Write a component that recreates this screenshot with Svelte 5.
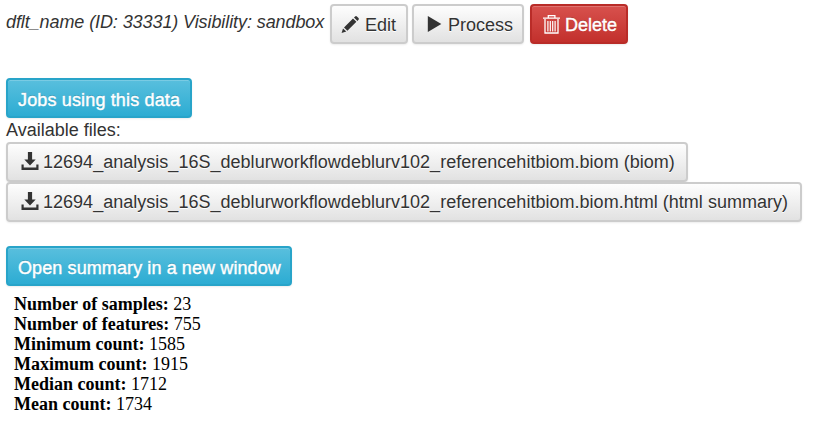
<script>
  const files = [
    { name: '12694_analysis_16S_deblurworkflowdeblurv102_referencehitbiom.biom (biom)', width: 682 },
    { name: '12694_analysis_16S_deblurworkflowdeblurv102_referencehitbiom.biom.html (html summary)', width: 796 }
  ];
  const stats = [
    ['Number of samples', 23],
    ['Number of features', 755],
    ['Minimum count', 1585],
    ['Maximum count', 1915],
    ['Median count', 1712],
    ['Mean count', 1734]
  ];
</script>

<main>
  <header>
    <i class="title">dflt_name (ID: 33331) Visibility: sandbox</i>
    <button class="btn edit">
      <svg width="20" height="20" viewBox="0 0 20 20"><path fill="#333" d="M.6 18l1.4-4.6 3.3 3.2zM3 12.4L12 3.4l3.4 3.3-9 9zM13 2.5l1.1-1.1q.9-.9 1.8 0l1.6 1.6q.9.9 0 1.8l-1.1 1.1z"/></svg>
      <span>Edit</span>
    </button>
    <button class="btn process">
      <svg width="20" height="20" viewBox="0 0 20 20"><path fill="#333" d="M2.8 1L16.3 9 2.8 17z"/></svg>
      <span>Process</span>
    </button>
    <button class="btn danger">
      <svg width="20" height="20" viewBox="0 0 20 20" fill="none" stroke="#fff"><path stroke-width="1.3" d="M1 3.2h17M6.3 3V.7h6.6V3M3 4v14h13V4"/><path stroke-width="1.2" d="M5.9 6v10.5M8.3 6v10.5M10.7 6v10.5M13.1 6v10.5"/></svg>
      <span>Delete</span>
    </button>
  </header>

  <button class="btn info jobs"><span>Jobs using this data</span></button>
  <div class="label">Available files:</div>
  <div class="files">
    {#each files as file}
      <button class="btn file" style:width="{file.width}px">
        <svg width="18" height="20" viewBox="0 0 18 20"><path fill="#333" d="M6.9 0h4.2v7.4h3.6L9 13.6 3.3 7.4h3.6zM.5 12.4h2.2v3.2h12.6v-3h2.2v5.4H.5z"/></svg>
        <span>{file.name}</span>
      </button>
    {/each}
  </div>
  <button class="btn info open"><span>Open summary in a new window</span></button>

  <section>
    {#each stats as [label, value]}
      <div><b>{label}:</b> {value}</div>
    {/each}
  </section>
</main>

<style>
  :global(body) { margin: 0; background: #fff; }
  main {
    box-sizing: border-box;
    height: 430px;
    padding: 4px 6px 0;
    display: flex;
    flex-direction: column;
    align-items: flex-start;
    overflow: hidden;
    font: 18px/20px "Liberation Sans", Arial, sans-serif;
    color: #333;
    white-space: nowrap;
  }
  header { display: flex; height: 40px; margin-bottom: 34px; }
  .title { width: 324px; line-height: 36px; letter-spacing: -.09px; }
  .btn {
    box-sizing: border-box;
    flex: none;
    display: flex;
    align-items: center;
    height: 40px;
    margin: 0;
    padding: 1px 0 0 10px;
    border: 2px solid #ccc;
    border-radius: 4px;
    background: linear-gradient(#fff, #e0e0e0);
    background-origin: border-box;
    box-shadow: inset 0 1px 0 rgba(255,255,255,.2), 0 1px 2px rgba(0,0,0,.08);
    color: #333;
    font: inherit;
    text-align: left;
    text-shadow: 0 1px 0 #fff;
    white-space: nowrap;
  }
  svg { flex: none; display: block; }
  .edit { width: 78px; margin-right: 4px; padding-left: 9px; gap: 4px; }
  .process { width: 112px; margin-right: 6px; padding-left: 11px; gap: 3px; }
  .danger {
    width: 98px;
    padding-left: 10px;
    gap: 3px;
    color: #fff;
    border-color: #b92c28;
    background-image: linear-gradient(#d9534f, #c12e2a);
    text-shadow: 0 -1px 0 rgba(0,0,0,.2);
    -webkit-text-stroke: .4px #fff;
  }
  .info {
    color: #fff;
    border-color: #28a4c9;
    background-image: linear-gradient(#5bc0de, #2aabd2);
    text-shadow: 0 -1px 0 rgba(0,0,0,.2);
    -webkit-text-stroke: .4px #fff;
    padding-top: 3px;
  }
  .jobs { width: 186px; letter-spacing: .15px; }
  .label { height: 24px; line-height: 24px; }
  .files { margin-bottom: 24px; }
  .file { padding-left: 13px; gap: 4px; padding-top: 0; letter-spacing: .02px; }
  .open { width: 286px; letter-spacing: .1px; }
  section {
    padding: 8px 8px 0;
    font: 18px/20px "Liberation Serif", "Times New Roman", serif;
    color: #000;
  }
</style>
